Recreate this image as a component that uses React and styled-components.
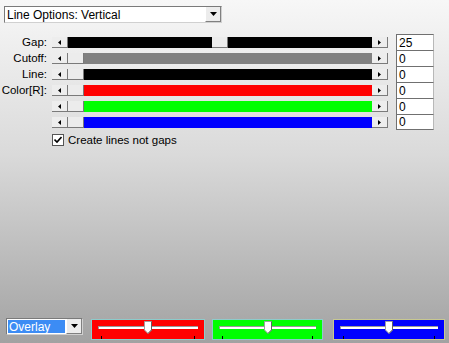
import React from "react";
import styled, { createGlobalStyle } from "styled-components";

const Global = createGlobalStyle`
  html, body { margin: 0; padding: 0; }
  body { font-family: "Liberation Sans", Arial, sans-serif; }
`;

const Page = styled.div`
  width: 449px;
  height: 343px;
  box-sizing: border-box;
  padding-top: 6px;
  display: flex;
  flex-direction: column;
  background: linear-gradient(#f7f7f7 0%, #dadada 45%, #a2a2a2 100%);
  font-size: 11px;
  color: #000;
  overflow: hidden;
`;

const Select = styled.div`
  box-sizing: border-box;
  width: ${(p) => p.$w}px;
  height: 17px;
  margin-left: ${(p) => p.$ml}px;
  display: flex;
  align-items: stretch;
  background: #fff;
  border: 1px solid #7a7a7a;
  border-right-color: #d0d0d0;
  border-bottom-color: #d0d0d0;
`;

const SelectText = styled.div`
  flex: 1;
  display: flex;
  align-items: center;
  padding-left: ${(p) => (p.$sel ? 1 : 2)}px;
  margin: ${(p) => (p.$sel ? "1px" : "0")};
  background: ${(p) => (p.$sel ? "#3c8cf4" : "transparent")};
  color: ${(p) => (p.$sel ? "#fff" : "#000")};
  font-size: 12px;
  white-space: nowrap;
`;

const ArrowBtn = styled.div`
  width: 16px;
  display: flex;
  align-items: center;
  justify-content: center;
  background: #ececec;
  border-left: 1px solid #fff;
  border-right: 1px solid #808080;
  border-bottom: 1px solid #808080;
  box-sizing: border-box;
`;

const Rows = styled.div`
  margin-top: 11px;
  display: flex;
  flex-direction: column;
`;

const Row = styled.div`
  height: 16px;
  display: flex;
  align-items: center;
`;

const Label = styled.div`
  width: 47px;
  text-align: right;
  font-size: 11.5px;
  white-space: nowrap;
`;

const Scroll = styled.div`
  margin-left: 5px;
  width: 336px;
  height: 11px;
  margin-top: 1px;
  display: flex;
`;

const ScrollBtn = styled.div`
  width: 16px;
  height: 11px;
  box-sizing: border-box;
  background: #ededed;
  border-right: 1px solid #7a7a7a;
  border-bottom: 1px solid #7a7a7a;
  display: flex;
  align-items: center;
  justify-content: center;
`;

const Track = styled.div`
  flex: 1;
  position: relative;
  background: ${(p) => p.$color};
`;

const Thumb = styled.div`
  position: absolute;
  top: 0;
  width: 16px;
  height: 11px;
  box-sizing: border-box;
  background: #ececec;
  border-right: 1px solid #7a7a7a;
  border-bottom: 1px solid #7a7a7a;
`;

const NumBox = styled.div`
  margin-left: 8px;
  width: 38px;
  height: 16px;
  box-sizing: border-box;
  background: #fff;
  border: 1px solid #707070;
  border-bottom: ${(p) => (p.$last ? "1px solid #707070" : "none")};
  border-right-color: #b8b8b8;
  padding-left: 2px;
  display: flex;
  align-items: center;
  font-size: 12px;
  align-self: flex-start;
`;

const CheckRow = styled.label`
  margin-top: 3px;
  margin-left: 52px;
  display: flex;
  align-items: center;
  gap: 4px;
  height: 13px;
  font-size: 11.5px;
`;

const Box = styled.span`
  width: 12px;
  height: 12px;
  box-sizing: border-box;
  background: #fff;
  border: 1px solid #555;
  display: flex;
  align-items: center;
  justify-content: center;
`;

const Spacer = styled.div`
  flex: 1;
`;

const Bottom = styled.div`
  display: flex;
  align-items: flex-start;
  padding-left: 6px;
  height: 25px;
`;

const Panel = styled.div`
  margin-left: ${(p) => p.$ml}px;
  margin-top: 1px;
  width: ${(p) => p.$w}px;
  height: 21px;
  box-sizing: border-box;
  background: ${(p) => p.$bg};
  border: 1px solid ${(p) => p.$border};
  position: relative;
`;

const Rail = styled.div`
  position: absolute;
  left: 6px;
  right: 6px;
  top: 6px;
  height: 3px;
  box-sizing: border-box;
  background: #fff;
  border-top: 1px solid #9a9a9a;
  border-left: 1px solid #9a9a9a;
`;

const Tick = styled.div`
  position: absolute;
  bottom: 0;
  width: 1px;
  height: 3px;
  background: #000;
  left: ${(p) => p.$x}px;
`;

const KnobWrap = styled.div`
  position: absolute;
  top: 1px;
  left: 50%;
  margin-left: -4px;
  width: 8px;
  height: 13px;
`;

const Tri = ({ dir }) => (
  <svg width="4" height="5" viewBox="0 0 4 5">
    {dir === "left" ? <path d="M3 0 L0 2.5 L3 5 Z" fill="#000" /> : <path d="M0 0 L3 2.5 L0 5 Z" fill="#000" />}
  </svg>
);

const Down = () => (
  <svg width="7" height="4" viewBox="0 0 7 4">
    <path d="M0 0 H7 L3.5 4 Z" fill="#000" />
  </svg>
);

const Knob = () => (
  <KnobWrap>
    <svg width="8" height="13" viewBox="0 0 8 13">
      <path d="M0.5 0.5 H7.5 V9 L4 12.5 L0.5 9 Z" fill="#fff" stroke="#a0a0a0" />
      <path d="M7.5 0.5 V9 L4 12.5" fill="none" stroke="#606060" />
    </svg>
  </KnobWrap>
);

const rows = [
  { label: "Gap:", color: "#000", value: 25, max: 50 },
  { label: "Cutoff:", color: "#808080", value: 0, max: 50 },
  { label: "Line:", color: "#000", value: 0, max: 50 },
  { label: "Color[R]:", color: "#ff0000", value: 0, max: 255 },
  { label: "", color: "#00ff00", value: 0, max: 255 },
  { label: "", color: "#0000ff", value: 0, max: 255 },
];

const TRACK = 304;
const THUMB = 16;

function SliderRow({ r, last }) {
  const left = Math.round((r.value / r.max) * (TRACK - THUMB));
  return (
    <Row>
      <Label>{r.label}</Label>
      <Scroll>
        <ScrollBtn>
          <Tri dir="left" />
        </ScrollBtn>
        <Track $color={r.color}>
          <Thumb style={{ left }} />
        </Track>
        <ScrollBtn>
          <Tri dir="right" />
        </ScrollBtn>
      </Scroll>
      <NumBox $last={last}>{r.value}</NumBox>
    </Row>
  );
}

function ColorPanel({ bg, border, w, ml }) {
  return (
    <Panel $bg={bg} $border={border} $w={w} $ml={ml}>
      <Rail />
      <Tick $x={9} />
      <Tick $x={w - 12} />
      <Knob />
    </Panel>
  );
}

export default function App() {
  return (
    <>
      <Global />
      <Page>
        <Select $w={218} $ml={4}>
          <SelectText>Line Options: Vertical</SelectText>
          <ArrowBtn>
            <Down />
          </ArrowBtn>
        </Select>
        <Rows>
          {rows.map((r, i) => (
            <SliderRow key={i} r={r} last={i === rows.length - 1} />
          ))}
        </Rows>
        <CheckRow>
          <Box>
            <svg width="8" height="8" viewBox="0 0 8 8">
              <path d="M0.5 3.5 L3 6 L7.5 1" fill="none" stroke="#000" strokeWidth="1.6" />
            </svg>
          </Box>
          Create lines not gaps
        </CheckRow>
        <Spacer />
        <Bottom>
          <Select $w={77} $ml={0}>
            <SelectText $sel>Overlay</SelectText>
            <ArrowBtn>
              <Down />
            </ArrowBtn>
          </Select>
          <ColorPanel bg="#ff0000" border="#8ccccc" w={114} ml={8} />
          <ColorPanel bg="#00ff00" border="#8ccccc" w={111} ml={7} />
          <ColorPanel bg="#0000ff" border="#c8c890" w={112} ml={10} />
        </Bottom>
      </Page>
    </>
  );
}
